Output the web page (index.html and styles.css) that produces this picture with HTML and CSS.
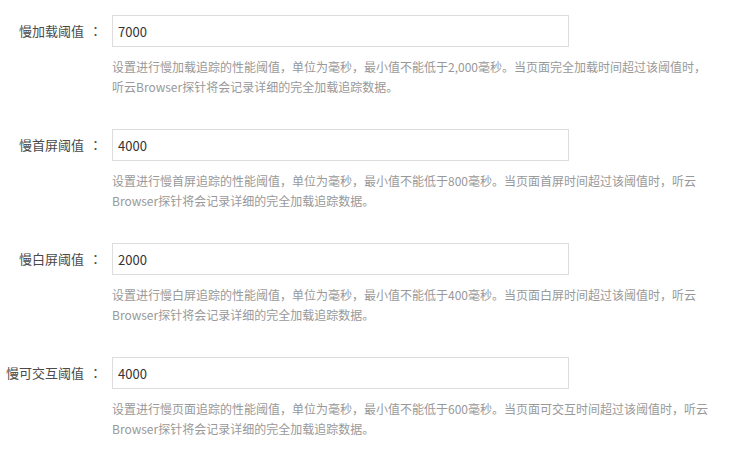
FILE: index.html
```html
<!DOCTYPE html>
<html lang="zh-CN">
<head>
<meta charset="utf-8">
<title>阈值设置</title>
<link rel="stylesheet" href="styles.css">
</head>
<body>
<div class="form">
  <div class="field">
    <label class="label">慢加载阈值<span class="colon">：</span></label>
    <input class="input" type="text" value="7000">
    <p class="help">设置进行慢加载追踪的性能阈值，单位为毫秒，最小值不能低于2,000毫秒。当页面完全加载时间超过该阈值时，<br>听云Browser探针将会记录详细的完全加载追踪数据。</p>
  </div>
  <div class="field">
    <label class="label">慢首屏阈值<span class="colon">：</span></label>
    <input class="input" type="text" value="4000">
    <p class="help">设置进行慢首屏追踪的性能阈值，单位为毫秒，最小值不能低于800毫秒。当页面首屏时间超过该阈值时，听云<br>Browser探针将会记录详细的完全加载追踪数据。</p>
  </div>
  <div class="field">
    <label class="label">慢白屏阈值<span class="colon">：</span></label>
    <input class="input" type="text" value="2000">
    <p class="help">设置进行慢白屏追踪的性能阈值，单位为毫秒，最小值不能低于400毫秒。当页面白屏时间超过该阈值时，听云<br>Browser探针将会记录详细的完全加载追踪数据。</p>
  </div>
  <div class="field">
    <label class="label">慢可交互阈值<span class="colon">：</span></label>
    <input class="input" type="text" value="4000">
    <p class="help">设置进行慢页面追踪的性能阈值，单位为毫秒，最小值不能低于600毫秒。当页面可交互时间超过该阈值时，听云<br>Browser探针将会记录详细的完全加载追踪数据。</p>
  </div>
</div>
</body>
</html>
```

FILE: styles.css
```css
html, body {
  margin: 0;
  padding: 0;
  background: #fff;
}

body {
  font-family: "Microsoft YaHei", "Noto Sans CJK SC", sans-serif;
}

.form {
  padding-top: 15px;
}

.field {
  display: grid;
  grid-template-columns: 112px 457px;
  row-gap: 10px;
  margin-bottom: 32px;
}

.label {
  font-size: 13px;
  color: #4a4a4a;
  text-align: right;
  padding-right: 10px;
  line-height: 32px;
  white-space: nowrap;
}

.colon {
  display: inline-block;
  width: 13px;
  margin-left: 5px;
  text-align: center;
  font-family: "Noto Sans CJK TC", "Noto Sans CJK SC", sans-serif;
}

.input {
  box-sizing: border-box;
  width: 457px;
  height: 32px;
  margin: 0;
  padding: 0 5px;
  border: 1px solid #ddd;
  border-radius: 0;
  outline: none;
  font-family: "Microsoft YaHei", "Noto Sans CJK SC", sans-serif;
  font-size: 13px;
  color: #333;
  background: #fff;
}

.help {
  grid-column: 2;
  width: 600px;
  margin: 0;
  font-size: 12px;
  line-height: 20px;
  color: #999;
  white-space: nowrap;
}
```
